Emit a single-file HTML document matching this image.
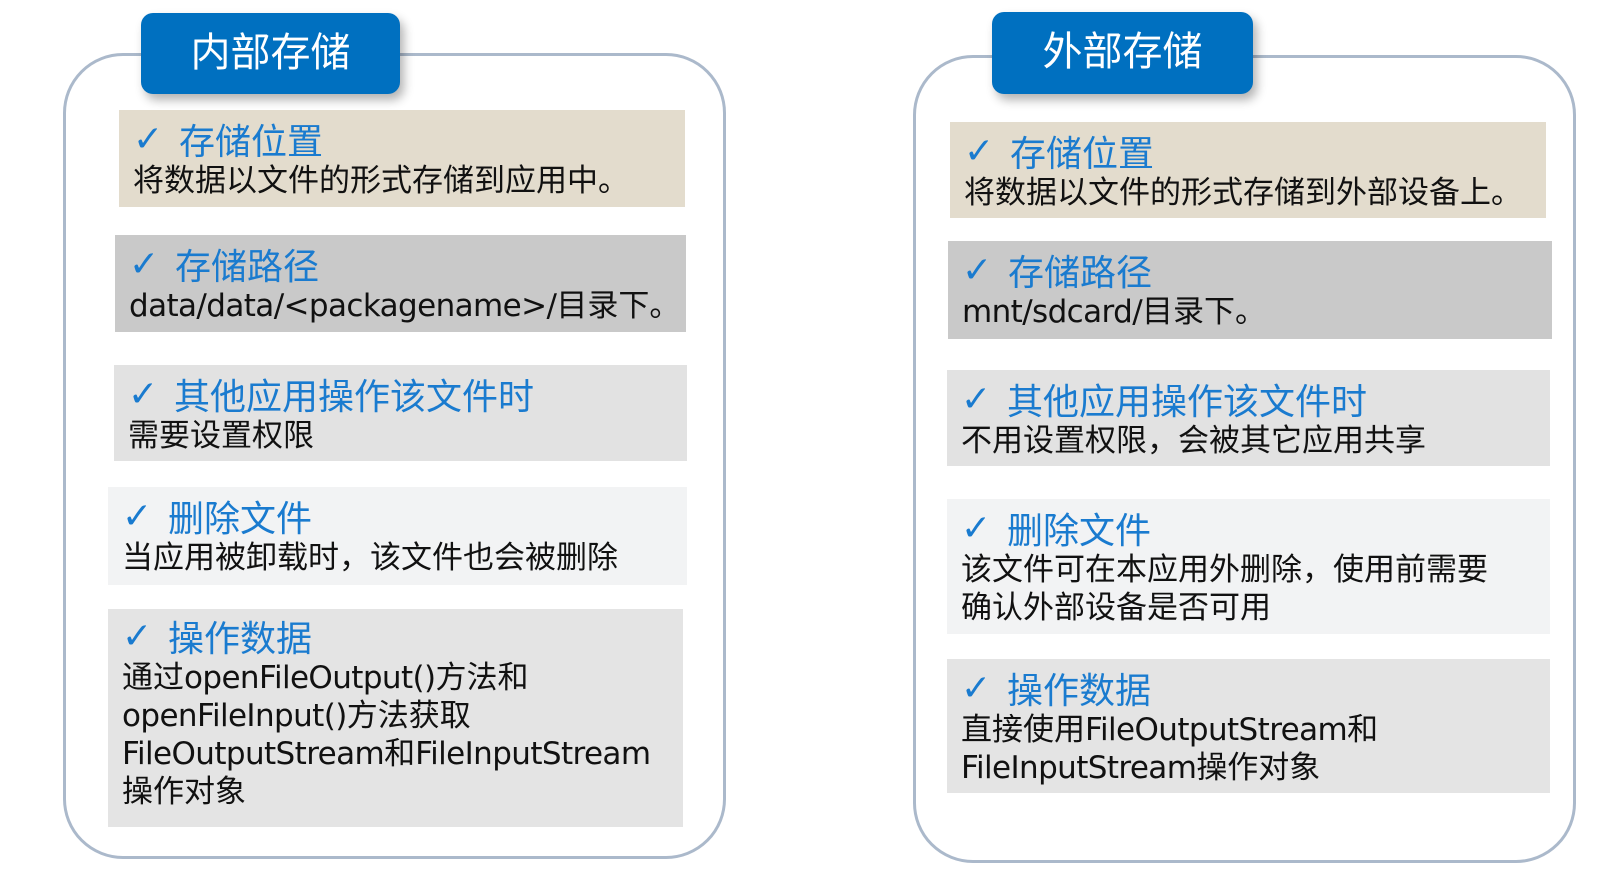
<!DOCTYPE html>
<html><head><meta charset="utf-8"><style>
*{margin:0;padding:0;box-sizing:border-box}
body{width:1611px;height:871px;background:#fff;position:relative;overflow:hidden;font-family:"Liberation Sans","Noto Sans CJK SC",sans-serif}
.panel{position:absolute;border:3px solid #abb9cb;border-radius:60px}
.tab{position:absolute;background:#0070c0;border-radius:12px;color:#fff;font-size:40px;text-align:center;line-height:80px;box-shadow:4px 6px 10px rgba(0,0,0,.3)}
.box{position:absolute;padding-left:14px;white-space:nowrap}
.t{color:#1a7bcf;font-size:36px;line-height:40px;height:40px;margin-top:12px;position:relative;padding-left:46px}
.t:before{content:"✓";position:absolute;left:0;top:-2px;font-size:36px;font-weight:bold;color:#1a7bcf;font-family:"DejaVu Sans",sans-serif}
.b{color:#111;font-size:31px;line-height:38px;font-family:"DejaVu Sans","Noto Sans CJK SC",sans-serif;letter-spacing:0}
.b .l{letter-spacing:-0.6px}
</style></head><body>
<div class="panel" style="left:63px;top:53px;width:663px;height:806px"></div>
<div class="tab" style="left:141px;top:13px;width:259px;height:81px">内部存储</div>
<div class="box" style="left:119px;top:110px;width:566px;height:97px;background:#e3dccd"><div class="t">存储位置</div><div class="b">将数据以文件的形式存储到应用中。</div></div>
<div class="box" style="left:115px;top:235px;width:571px;height:97px;background:#c9c9c9"><div class="t">存储路径</div><div class="b"><span class="l">data/data/&lt;packagename&gt;/</span>目录下。</div></div>
<div class="box" style="left:114px;top:365px;width:573px;height:96px;background:#e2e2e2"><div class="t">其他应用操作该文件时</div><div class="b">需要设置权限</div></div>
<div class="box" style="left:108px;top:487px;width:579px;height:98px;background:#f2f3f4"><div class="t">删除文件</div><div class="b">当应用被卸载时，该文件也会被删除</div></div>
<div class="box" style="left:108px;top:609px;width:575px;height:218px;background:#e4e4e4"><div class="t" style="margin-top:10px">操作数据</div><div class="b">通过<span class="l">openFileOutput()</span>方法和<br><span class="l">openFileInput()</span>方法获取<br><span class="l">FileOutputStream</span>和<span class="l">FileInputStream</span><br>操作对象</div></div>

<div class="panel" style="left:913px;top:55px;width:663px;height:808px"></div>
<div class="tab" style="left:992px;top:12px;width:261px;height:82px">外部存储</div>
<div class="box" style="left:950px;top:122px;width:596px;height:96px;background:#e3dccd"><div class="t">存储位置</div><div class="b">将数据以文件的形式存储到外部设备上。</div></div>
<div class="box" style="left:948px;top:241px;width:604px;height:98px;background:#c9c9c9"><div class="t">存储路径</div><div class="b"><span class="l">mnt/sdcard/</span>目录下。</div></div>
<div class="box" style="left:947px;top:370px;width:603px;height:96px;background:#e2e2e2"><div class="t">其他应用操作该文件时</div><div class="b">不用设置权限，会被其它应用共享</div></div>
<div class="box" style="left:947px;top:499px;width:603px;height:135px;background:#f2f3f4"><div class="t">删除文件</div><div class="b">该文件可在本应用外删除，使用前需要<br>确认外部设备是否可用</div></div>
<div class="box" style="left:947px;top:659px;width:603px;height:134px;background:#e4e4e4"><div class="t">操作数据</div><div class="b">直接使用<span class="l">FileOutputStream</span>和<br><span class="l">FileInputStream</span>操作对象</div></div>
</body></html>
